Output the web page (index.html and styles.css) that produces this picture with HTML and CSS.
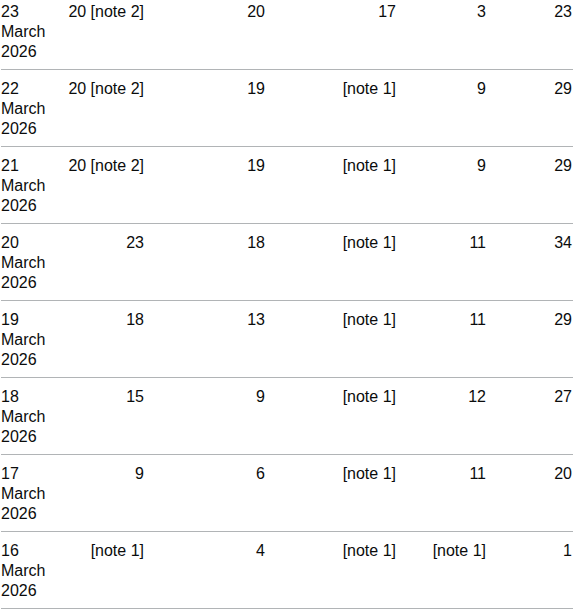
FILE: index.html
```html
<!DOCTYPE html>
<html lang="en">
<head>
<meta charset="utf-8">
<title>Daily figures</title>
<link rel="stylesheet" href="styles.css">
</head>
<body>
<div class="wrap">
<table class="data">
<colgroup>
<col class="c1"><col class="c2"><col class="c3"><col class="c4"><col class="c5"><col class="c6">
</colgroup>
<tbody>
<tr><td>23 March 2026</td><td class="num">20 [note 2]</td><td class="num">20</td><td class="num">17</td><td class="num">3</td><td class="num last">23</td></tr>
<tr><td>22 March 2026</td><td class="num">20 [note 2]</td><td class="num">19</td><td class="num">[note 1]</td><td class="num">9</td><td class="num last">29</td></tr>
<tr><td>21 March 2026</td><td class="num">20 [note 2]</td><td class="num">19</td><td class="num">[note 1]</td><td class="num">9</td><td class="num last">29</td></tr>
<tr><td>20 March 2026</td><td class="num">23</td><td class="num">18</td><td class="num">[note 1]</td><td class="num">11</td><td class="num last">34</td></tr>
<tr><td>19 March 2026</td><td class="num">18</td><td class="num">13</td><td class="num">[note 1]</td><td class="num">11</td><td class="num last">29</td></tr>
<tr><td>18 March 2026</td><td class="num">15</td><td class="num">9</td><td class="num">[note 1]</td><td class="num">12</td><td class="num last">27</td></tr>
<tr><td>17 March 2026</td><td class="num">9</td><td class="num">6</td><td class="num">[note 1]</td><td class="num">11</td><td class="num last">20</td></tr>
<tr><td>16 March 2026</td><td class="num">[note 1]</td><td class="num">4</td><td class="num">[note 1]</td><td class="num">[note 1]</td><td class="num last">1</td></tr>
</tbody>
</table>
</div>
</body>
</html>
```

FILE: styles.css
```css
html, body {
  margin: 0;
  padding: 0;
  background: #ffffff;
}
body {
  font-family: "Liberation Sans", Arial, sans-serif;
  font-size: 16px;
  line-height: 20px;
  color: #0b0c0c;
  overflow: hidden;
}
.wrap {
  margin-top: -7px;
  margin-left: 1px;
}
.data {
  border-collapse: collapse;
  border-spacing: 0;
  table-layout: fixed;
  width: 572px;
}
.c1 { width: 66px; }
.c2 { width: 97px; }
.c3 { width: 121px; }
.c4 { width: 131px; }
.c5 { width: 90px; }
.c6 { width: 67px; }
.data td {
  padding: 9px 20px 7px 0;
  border-bottom: 1px solid #b1b4b6;
  vertical-align: top;
  text-align: left;
}
.data td.num {
  text-align: right;
  white-space: nowrap;
}
.data td.last {
  padding-right: 1px;
}
```
